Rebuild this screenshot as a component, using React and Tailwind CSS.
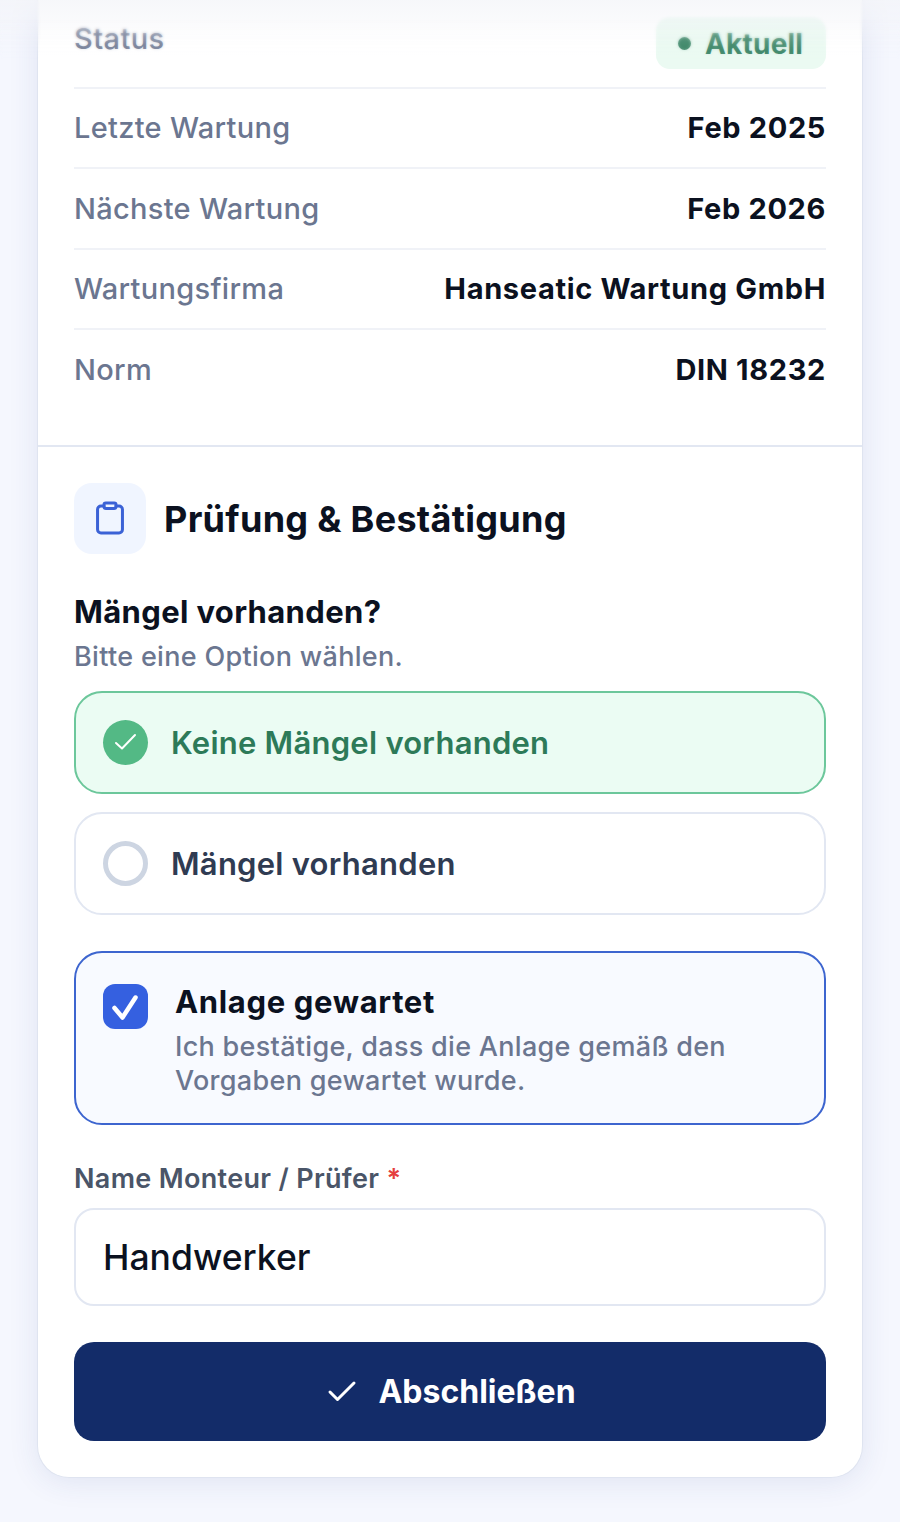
import React from 'react';
import { Check } from 'lucide-react';

const rows = [
  ['Letzte Wartung', 'Feb 2025'],
  ['Nächste Wartung', 'Feb 2026'],
  ['Wartungsfirma', 'Hanseatic Wartung GmbH'],
  ['Norm', 'DIN 18232'],
];

const ClipboardIcon = () => (
  <svg width="36" height="36" viewBox="0 0 24 24" fill="none" stroke="#3b62d6" strokeWidth="2" strokeLinecap="round" strokeLinejoin="round">
    <rect x="8" y="2" width="8" height="3.6" rx="1.2" />
    <path d="M16 4h2a2.300 2.300 0 0 1 2.300 2.300v13.400a2.300 2.300 0 0 1-2.300 2.300H6a2.300 2.300 0 0 1-2.300-2.300V6.300A2.300 2.300 0 0 1 6 4h2" />
  </svg>
);

export default function App() {
  return (
    <div className="relative h-[1522px] overflow-hidden bg-[#f5f7fe] px-[37px] font-['Inter',sans-serif]">
      <div className="rounded-b-[32px] border-x border-b border-[#dfe4f0] bg-white shadow-[0_4px_30px_rgba(40,60,140,0.1)]">
        <div className="px-[36px]">
          <div className="flex h-[89px] items-start justify-between border-b-2 border-[#f0f2f7] pt-[17px]">
            <span className="pt-[1px] text-[29px] leading-[42px] font-medium tracking-[0.4px] text-[#6b7690]">Status</span>
            <span className="flex h-[52px] w-[170px] items-center gap-[14px] rounded-[14px] bg-[#ebfaf2] pl-[22px] text-[28px] font-bold tracking-[0.2px] text-[#3a8566]">
              <span className="h-[13px] w-[13px] rounded-full bg-[#3a8566]" />
              <span className="pt-[1px]">Aktuell</span>
            </span>
          </div>
          {rows.map(([label, value], i) => (
            <div
              key={label}
              className={i < 3 ? 'flex h-[80.330px] items-center justify-between border-b-2 border-[#f0f2f7]' : 'flex h-[80px] items-center justify-between'}
            >
              <span className="text-[29px] font-medium tracking-[0.3px] text-[#6b7690]">{label}</span>
              <span className="text-[29px] font-bold tracking-[0.65px] text-[#0b1120]">{value}</span>
            </div>
          ))}
        </div>

        <div className="mt-[35px] border-t-2 border-[#e2e7f2] px-[36px] pt-[36px] pb-[36px]">
          <div className="flex items-center gap-[18px]">
            <div className="flex h-[71px] w-[72px] items-center justify-center rounded-[18px] bg-[#f0f5ff]">
              <ClipboardIcon />
            </div>
            <h2 className="pt-[1px] text-[36px] font-bold tracking-[0.3px] text-[#0b1120]">Prüfung &amp; Bestätigung</h2>
          </div>

          <h3 className="mt-[36px] text-[31px] leading-[44px] font-bold tracking-[0.35px] text-[#0b1120]">Mängel vorhanden?</h3>
          <p className="mt-[3px] text-[27px] leading-[40px] font-medium tracking-[0.32px] text-[#6b7690]">Bitte eine Option wählen.</p>

          <div className="mt-[14px] flex h-[103px] items-center gap-[23px] rounded-[28px] border-2 border-[#6cc79b] bg-[#ebfcf3] pl-[27px]">
            <span className="flex h-[45px] w-[45px] items-center justify-center rounded-full bg-[#53b985]">
              <svg width="45" height="45" viewBox="0 0 45 45" fill="none" stroke="white" strokeWidth="2" strokeLinecap="round" strokeLinejoin="round">
                <path d="M13 23l6 5.500L32 15" />
              </svg>
            </span>
            <span className="pt-[1px] text-[31px] font-semibold tracking-[0.25px] text-[#2d7a58]">Keine Mängel vorhanden</span>
          </div>

          <div className="mt-[18px] flex h-[103px] items-center gap-[23px] rounded-[28px] border-2 border-[#e2e7f2] bg-white pl-[27px]">
            <span className="h-[45px] w-[45px] rounded-full border-[5px] border-[#cdd5e2]" />
            <span className="pt-[1px] text-[31px] font-semibold tracking-[0.25px] text-[#2f3b52]">Mängel vorhanden</span>
          </div>

          <div className="mt-[36px] flex h-[174px] items-start gap-[27px] rounded-[28px] border-2 border-[#3d65cf] bg-[#f8faff] pt-[31px] pl-[27px]">
            <span className="flex h-[45px] w-[45px] shrink-0 items-center justify-center rounded-[12px] bg-[#3560e0]">
              <svg width="45" height="45" viewBox="0 0 45 45" fill="none" stroke="white" strokeWidth="4.500" strokeLinecap="round" strokeLinejoin="round">
                <path d="M11.500 24l8 9.500 13-20" />
              </svg>
            </span>
            <div>
              <div className="-mt-[4px] text-[31px] leading-[44px] font-bold tracking-[0.65px] text-[#0b1120]">Anlage gewartet</div>
              <div className="mt-[6px] text-[27px] leading-[34px] font-medium tracking-[0.3px] text-[#6b7690]">
                Ich bestätige, dass die Anlage gemäß den
                <br />
                Vorgaben gewartet wurde.
              </div>
            </div>
          </div>

          <div className="mt-[34px] text-[27px] leading-[40px] font-semibold tracking-[0.33px] text-[#4a5568]">
            Name Monteur / Prüfer <span className="text-[#e53e3e]">*</span>
          </div>
          <div className="mt-[9px] flex h-[98px] items-center rounded-[20px] border-2 border-[#e2e7f2] bg-white pt-[1px] pl-[27px] text-[35.500px] font-medium text-[#0b1120]">
            Handwerker
          </div>
          <button className="mt-[36px] flex h-[99px] w-full items-center justify-center gap-[18px] rounded-[20px] bg-[#132c69] pt-[1px] text-[32px] font-bold text-white">
            <Check size={36} strokeWidth={2} />
            Abschließen
          </button>
        </div>
      </div>

      <div className="absolute inset-x-0 top-0 h-[60px] bg-gradient-to-b from-[#f3f4f8]/70 to-transparent backdrop-blur-[1.500px] [mask-image:linear-gradient(to_bottom,black_30%,transparent)]" />
    </div>
  );
}
